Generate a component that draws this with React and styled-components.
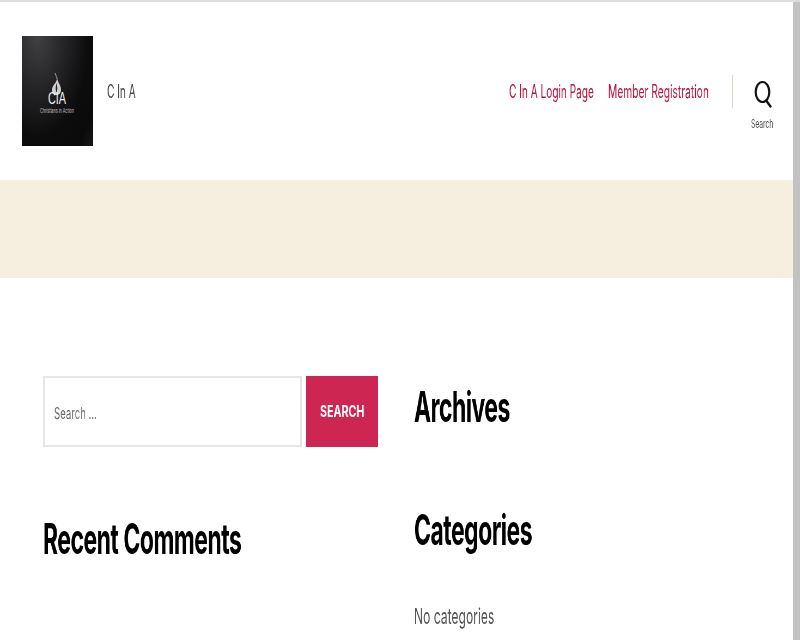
import React from "react";
import styled, { createGlobalStyle } from "styled-components";

const Global = createGlobalStyle`
  html, body { margin: 0; padding: 0; height: 640px; overflow: hidden; background: #fff; }
  body { font-family: Inter, "Liberation Sans", sans-serif; }
  * { box-sizing: border-box; }
`;

const Shell = styled.div`
  width: 800px; height: 640px; display: flex; overflow: hidden;
  border-top: 2px solid #dedede;
`;
const Page = styled.div`flex: 1; min-width: 0; display: flex; flex-direction: column;`;
const ScrollTrack = styled.div`width: 7px; background: #c2c2c2; flex: none;`;

const Squeezed = styled.span`
  display: block; width: 0; white-space: nowrap; transform-origin: left center;
  transform: scaleX(${p => p.$sx}); will-change: transform;
`;

const Header = styled.header`
  height: 178px; display: flex; align-items: flex-start; padding: 34px 0 0 22px;
`;
const LogoBox = styled.div`
  width: 71px; height: 110px; flex: none; overflow: hidden;
  background: radial-gradient(ellipse at 22% 0%, #414143 0%, #262628 32%, #0c0c0d 65%, #0a0a0a 85%, #161616 100%);
`;
const LogoSvg = styled.svg`display: block; width: 100%; height: 100%;`;
const SiteTitle = styled.div`
  width: 29px; margin: 45px 0 0 14px; font-size: 18px; line-height: 22px; color: #4a4a4a;
`;
const Nav = styled.nav`
  margin-left: auto; display: flex; align-items: flex-start; gap: 14px; padding-top: 45px;
`;
const NavLink = styled.a`
  display: block; width: ${p => p.$w}px; font-size: 18px; line-height: 22px; color: #b8173f;
`;
const SearchToggle = styled.div`
  margin-left: 9px; width: 61px; height: 60px; margin-top: -6px;
  display: flex; flex-direction: column; align-items: center;
  position: relative;
`;
const Rule = styled.div`
  position: absolute; left: 0; top: 0; width: 1px; height: 33px; background: #dcd7ca;
`;
const SearchIcon = styled.svg`display: block; width: 18px; height: 30px; margin: 3px 0 0 0;`;
const SearchLabel = styled.div`
  width: 24px; margin-top: 9px; font-size: 12px; line-height: 14px; color: #555;
`;

const Band = styled.div`height: 98px; background: #f5efe0; flex: none;`;

const Widgets = styled.main`
  display: grid; grid-template-columns: 335px 1fr; column-gap: 36px;
  padding: 98px 0 0 43px;
`;
const Col = styled.div`display: flex; flex-direction: column;`;
const SearchForm = styled.form`display: flex; gap: 4px; height: 71px;`;
const SearchInput = styled.div`
  width: 259px; flex: none; border: 2px solid #e6e6e6; padding: 25px 0 0 9px;
  font-size: 16px; line-height: 20px; color: #6b6b6b; background: #fff;
`;
const SearchBtn = styled.button`
  width: 72px; flex: none; border: 0; padding: 0 0 0 14px; background: #cd2653; color: #fff; font-family: inherit;
  font-size: 15.500px; font-weight: 700; text-align: left;
`;
const Heading = styled.h2`
  margin: 0; height: ${p => p.$h}px; font-size: 42px; line-height: 50px; font-weight: 700; color: #000;
  letter-spacing: -0.02em; margin-top: ${p => p.$mt || 0}px;
`;
const Empty = styled.p`
  margin: 48px 0 0; font-size: 22px; line-height: 26px; color: #555;
`;

export default function App() {
  return (
    <>
      <Global />
      <Shell>
        <Page>
          <Header>
            <LogoBox>
              <LogoSvg viewBox="0 0 71 110">
                <path d="M33 37 C34 40 35 41 35 43" stroke="#9a9a9a" strokeWidth="1" fill="none" />
                <path d="M35 42 C35 47 30 49 30 54 C30 57 32 59 34.500 59 C37 59 39 57 39 54 C39 49 36 47 35 42Z" fill="#d0d0d0" />
                <path d="M34.500 47 C34 50 33 52 34.500 57 C36 52 35 50 34.500 47Z" fill="#222" />
                <text x="35" y="68" textAnchor="middle" fontFamily="Liberation Sans, sans-serif" fontSize="17" fill="#f2f2f2" textLength="18" lengthAdjust="spacingAndGlyphs">CIA</text>
                <text x="35" y="77" textAnchor="middle" fontFamily="Inter, sans-serif" fontSize="5.500" fill="#c4c4c4" textLength="34" lengthAdjust="spacingAndGlyphs">Christians in Action</text>
              </LogoSvg>
            </LogoBox>
            <SiteTitle><Squeezed $sx={0.56}>C In A</Squeezed></SiteTitle>
            <Nav>
              <NavLink $w={85}><Squeezed $sx={0.56}>C In A Login Page</Squeezed></NavLink>
              <NavLink $w={101}><Squeezed $sx={0.57}>Member Registration</Squeezed></NavLink>
              <SearchToggle>
                <Rule />
                <SearchIcon viewBox="0 0 18 30" fill="none" stroke="#111" strokeWidth="2.200">
                  <ellipse cx="8.500" cy="14" rx="6.800" ry="10" />
                  <path d="M12.500 23 L16.500 28.500" strokeLinecap="round" />
                </SearchIcon>
                <SearchLabel><Squeezed $sx={0.56}>Search</Squeezed></SearchLabel>
              </SearchToggle>
            </Nav>
          </Header>
          <Band />
          <Widgets>
            <Col>
              <SearchForm>
                <SearchInput><Squeezed $sx={0.6}>Search ...</Squeezed></SearchInput>
                <SearchBtn type="button"><Squeezed $sx={0.69}>SEARCH</Squeezed></SearchBtn>
              </SearchForm>
              <Heading $mt={67} $h={50}><Squeezed $sx={0.545}>Recent Comments</Squeezed></Heading>
            </Col>
            <Col>
              <Heading $mt={6} $h={50}><Squeezed $sx={0.545}>Archives</Squeezed></Heading>
              <Heading $mt={73} $h={50}><Squeezed $sx={0.545}>Categories</Squeezed></Heading>
              <Empty><Squeezed $sx={0.55}>No categories</Squeezed></Empty>
            </Col>
          </Widgets>
        </Page>
        <ScrollTrack />
      </Shell>
    </>
  );
}
